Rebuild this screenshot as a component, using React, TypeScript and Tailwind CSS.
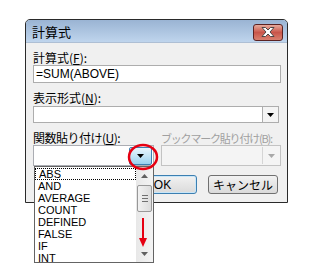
import React from "react";

const jp = "font-['Noto_Sans_CJK_JP','Liberation_Sans',sans-serif]";

const Arrow = ({ color = "#000" }: { color?: string }) => (
  <svg width="7" height="4" viewBox="0 0 7 4">
    <path d="M0 0h7L3.5 4z" fill={color} />
  </svg>
);

const items = ["ABS", "AND", "AVERAGE", "COUNT", "DEFINED", "FALSE", "IF", "INT"];

export default function App() {
  return (
    <div className={`relative w-[313px] h-[278px] bg-white overflow-hidden text-[12px] leading-[14px] text-black ${jp}`}>
      <div className="pl-[25px] pt-[19px]">
        <div className="w-[263px] h-[184px] border border-[#2a2a2a] rounded-t-[5px] bg-[#f0f0f0] flex flex-col overflow-hidden">
          {/* title bar */}
          <div className="h-[23px] bg-gradient-to-b from-[#9ab4d3] to-[#bfd5ed] flex items-center justify-between pl-[6px] pr-[4px] border-b border-[#aebfd4]">
            <span className="text-[13px] leading-[14px] mt-[2px]">計算式</span>
            <div className="w-[30px] h-[17px] mt-[2px] rounded-[3px] border border-[#5b2222] bg-gradient-to-b from-[#e6aa9c] via-[#c9554a] to-[#d9806f] flex items-center justify-center">
              <svg width="14" height="10" viewBox="0 0 14 10">
                <path
                  d="M1 0.5h3.5L7 3l2.5-2.5H13L9 5l4 4.5H9.5L7 7 4.5 9.5H1L5 5z"
                  fill="#fff"
                  stroke="#3c3c3c"
                  strokeWidth="0.9"
                />
              </svg>
            </div>
          </div>

          {/* body */}
          <div className="flex flex-col pl-[7px]">
            <div className="mt-[8px] h-[14px]">
              計算式(<span className="underline">F</span>):
            </div>
            <div className="w-[248px] h-[18px] bg-white border border-[#adadad] pl-[2px] flex items-center font-['Liberation_Sans',sans-serif] text-[12px]">
              =SUM(ABOVE)
            </div>

            <div className="mt-[8px] h-[14px]">
              表示形式(<span className="underline">N</span>):
            </div>
            <div className="mt-[1px] w-[246px] h-[17px] bg-white border border-[#adadad] flex justify-end">
              <div className="w-[16px] h-full border-l border-[#adadad] bg-[#f4f4f4] flex items-center justify-center">
                <Arrow />
              </div>
            </div>

            <div className="mt-[8px] h-[14px] flex whitespace-nowrap">
              <span className="w-[128px] shrink-0 tracking-[-0.5px]">
                関数貼り付け(<span className="underline">U</span>):
              </span>
              <span className="shrink-0 text-[11px] tracking-[-1.2px] text-[#a0a0a0]">
                ブックマーク貼り付け(B):
              </span>
            </div>
            <div className="h-[21px] flex gap-[7px]">
              <div className="w-[121px] h-full bg-white border border-[#abadb3] flex justify-end items-center pr-[1px]">
                <div className="w-[23px] h-[18px] rounded-[2px] border border-[#3c7fb1] bg-gradient-to-b from-[#e8f5fd] via-[#c4e5f6] to-[#98d1ef] flex items-center justify-center">
                  <Arrow />
                </div>
              </div>
              <div className="w-[120px] h-full bg-[#f4f4f4] border border-[#c3c3c3] flex justify-end items-center pr-[1px]">
                <div className="w-[17px] h-[17px] border-l border-[#d5d5d5] flex items-center justify-center">
                  <Arrow color="#a8a8a8" />
                </div>
              </div>
            </div>

            <div className="mt-[9px] flex">
              <div className="ml-[95px] w-[69px] h-[19px] rounded-[3px] border border-[#3c7fb1] bg-gradient-to-b from-[#f2f2f2] to-[#dadada] shadow-[inset_0_0_0_1px_#c8e6f8] flex items-center justify-center font-['Liberation_Sans',sans-serif]">
                OK
              </div>
              <div className="ml-[11px] w-[70px] h-[19px] rounded-[3px] border border-[#707070] bg-gradient-to-b from-[#f2f2f2] to-[#dadada] flex items-center justify-center">
                キャンセル
              </div>
            </div>
          </div>
        </div>
      </div>

      {/* dropdown list */}
      <div className="absolute left-[34px] top-[166px] w-[120px] h-[97px] bg-white border border-[#646464] flex font-['Liberation_Sans',sans-serif] text-[11px] leading-[12px]">
        <div className="flex-1 flex flex-col pt-[1px]">
          {items.map((it, i) => (
            <div
              key={it}
              className={`h-[12px] pl-[3px] ${i === 0 ? "border border-dotted border-black pl-[2px] leading-[10px]" : ""}`}
            >
              {it}
            </div>
          ))}
        </div>
        <div className="w-[17px] h-full bg-gradient-to-r from-[#e8e8e8] to-[#f4f4f4] flex flex-col items-center">
          <div className="h-[17px] w-full flex items-center justify-center">
            <svg width="7" height="4" viewBox="0 0 7 4">
              <path d="M0 4h7L3.5 0z" fill="#606060" />
            </svg>
          </div>
          <div className="w-[15px] h-[27px] mt-[1px] rounded-[2px] border border-[#989898] bg-gradient-to-r from-[#f2f2f2] to-[#dcdcdc] flex flex-col items-center justify-center gap-[2px]">
            <div className="w-[6px] h-px bg-[#707070]" />
            <div className="w-[6px] h-px bg-[#707070]" />
            <div className="w-[6px] h-px bg-[#707070]" />
          </div>
          <div className="flex-1" />
          <div className="h-[17px] w-full flex items-center justify-center">
            <Arrow color="#606060" />
          </div>
        </div>
      </div>

      {/* annotations */}
      <svg className="absolute left-0 top-0" width="313" height="278">
        <ellipse cx="143" cy="157" rx="14" ry="12" fill="none" stroke="#e60012" strokeWidth="2.5" />
        <line x1="143" y1="218" x2="143" y2="240" stroke="#e60012" strokeWidth="2" />
        <path d="M139 238h8l-4 9z" fill="#e60012" />
      </svg>
    </div>
  );
}
